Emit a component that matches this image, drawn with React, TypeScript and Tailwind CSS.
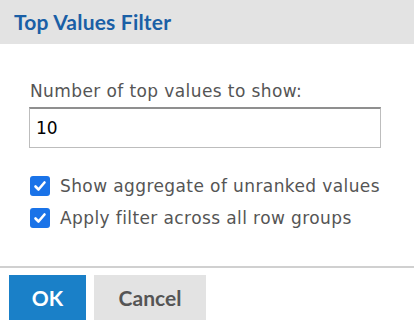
import React from "react";

function Check() {
  return (
    <span className="flex h-[20px] w-[20px] shrink-0 items-center justify-center rounded-[3px] bg-[#1a73e8]">
      <svg width="14" height="14" viewBox="0 0 14 14">
        <path d="M2.5 7.5 L5.5 10.5 L11.5 3.5" fill="none" stroke="#fff" strokeWidth="2.6" strokeLinecap="round" strokeLinejoin="round" />
      </svg>
    </span>
  );
}

export default function App() {
  const head = { fontFamily: '"Lato", "Open Sans", sans-serif' };
  const body = { fontFamily: '"DejaVu Sans", Verdana, sans-serif' };
  return (
    <div className="h-[328px] w-[414px] bg-white flex flex-col">
      <div className="h-[44px] bg-[#e3e3e3] flex items-center px-[14px]">
        <span className="text-[21px] font-bold tracking-[0.2px] text-[#1a5fa6]" style={head}>Top Values Filter</span>
      </div>
      <div className="flex flex-col px-[30px] pt-[37px]" style={body}>
        <label className="text-[17px] leading-[20px] tracking-[0.4px] text-[#555] whitespace-nowrap">Number of top values to show:</label>
        <input
          defaultValue="10"
          className="mt-[6px] h-[41px] w-[352px] -ml-[1px] border border-[#bdbdbd] border-t-2 border-t-[#8f8f8f] px-[6px] text-[17px] text-black outline-none"
          style={body}
        />
        <div className="mt-[28px] flex items-center gap-[10px]">
          <Check />
          <span className="text-[17px] leading-[20px] tracking-[0.4px] text-[#555] whitespace-nowrap">Show aggregate of unranked values</span>
        </div>
        <div className="mt-[12px] flex items-center gap-[10px]">
          <Check />
          <span className="text-[17px] leading-[20px] tracking-[0.4px] text-[#555] whitespace-nowrap">Apply filter across all row groups</span>
        </div>
      </div>
      <div className="mt-auto border-t-2 border-[#d0d0d0] flex gap-[8px] px-[9px] pt-[7px] pb-[8px]" style={head}>
        <button className="h-[45px] w-[77px] bg-[#1a80c8] text-white text-[21px] font-bold">OK</button>
        <button className="h-[45px] w-[112px] bg-[#e3e3e3] text-[#555] text-[21px] font-bold">Cancel</button>
      </div>
    </div>
  );
}
